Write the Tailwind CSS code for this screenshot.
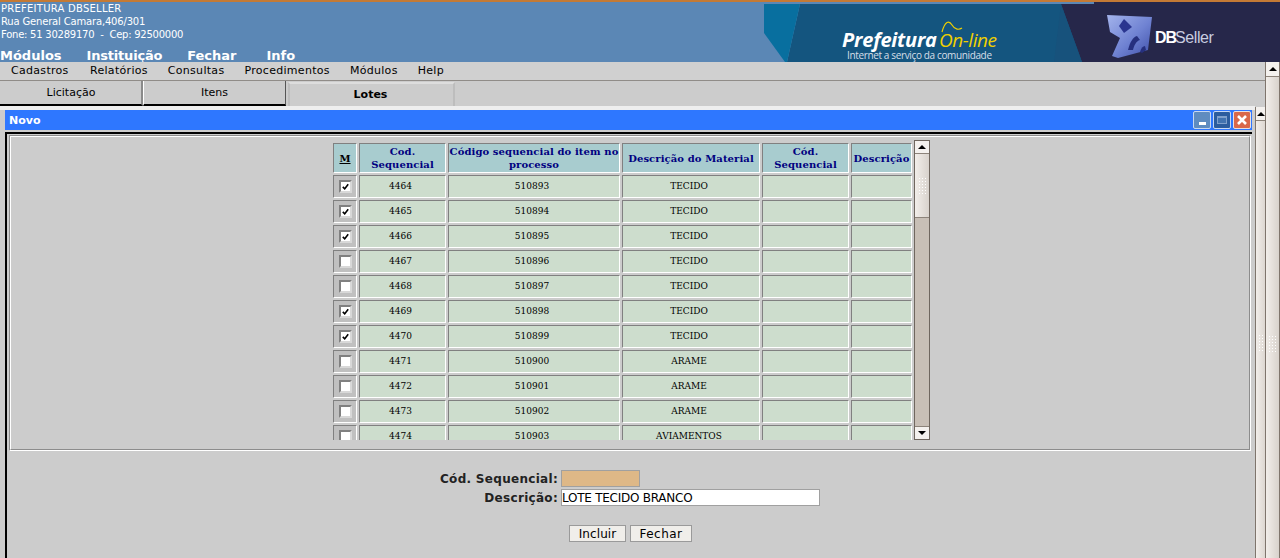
<!DOCTYPE html>
<html><head><meta charset="utf-8"><script src="https://cdn.jsdelivr.net/npm/@tailwindcss/browser@4"></script></head>
<body class="m-0 bg-[#cccccc] overflow-hidden">
<div class="w-[1280px] h-[558px] overflow-hidden flex flex-col font-['DejaVu_Sans',sans-serif] text-black">
  <header class="h-[62px] shrink-0 flex justify-between bg-[#5b87b5] border-t-2 border-[#c47a35] overflow-hidden">
    <div class="text-white pl-px">
      <div class="text-[10px] leading-[13px]">
        <div class="tracking-[0.25px]">PREFEITURA DBSELLER</div><div class="tracking-[-0.17px]">Rua General Camara,406/301</div><div class="whitespace-pre tracking-[-0.24px]">Fone: 51 30289170  -  Cep: 92500000</div>
      </div>
      <nav class="flex gap-[25px] text-[13px] font-bold leading-[16px] mt-[7px] -ml-px"><span>Módulos</span><span class="tracking-[-0.2px]">Instituição</span><span>Fechar</span><span class="ml-[5px]">Info</span></nav>
    </div>
    <svg class="w-[516px] h-[60px] shrink-0" viewBox="0 2 516 60">
      <defs><linearGradient id="logoBlue" x1="0" y1="0" x2="1" y2="1"><stop offset="0" stop-color="#a4b4ec"/><stop offset="0.55" stop-color="#6f82d2"/><stop offset="1" stop-color="#3d4ea8"/></linearGradient></defs>
      <rect x="0" y="2" width="516" height="60" fill="#26274a"/>
      <rect x="0" y="2" width="330" height="2" fill="#5b87b5"/>
      <rect x="0" y="4" width="60" height="58" fill="#5b87b5"/>
      <polygon points="36,4 297,4 318,62 23,62" fill="#14557f"/>
      <polygon points="297,4 290,62 318,62" fill="#17527c"/>
      <polygon points="0,4 36,4 23,62 21,62 0,33" fill="#086f9f"/>
      <text x="78" y="47" font-family="Open Sans, sans-serif" font-size="20" font-weight="700" font-style="italic" fill="#ffffff" textLength="95">Prefeitura</text>
      <text x="175" y="47" font-family="Open Sans, sans-serif" font-size="19" font-style="italic" fill="#f0d000" textLength="58">On-line</text>
      <path d="M178 32 C181 21 185 20 188 25 C191 30 195 30 198 28" fill="none" stroke="#f0d000" stroke-width="1.2"/>
      <text x="83" y="59" font-family="Open Sans, sans-serif" font-size="10" fill="#d6dfe8" textLength="145">Internet a serviço da comunidade</text>
      <polygon points="343,15 388,17 384,50 354,58 348,56 356,38 346,32" fill="url(#logoBlue)"/>
      <polygon points="360,19 368,27 360,33 355,26" fill="#2a3590"/>
      <path d="M364 50 C366 42 369 37 373 36 L376 40 C372 41 370 46 369 50 Z" fill="#26307e"/>
      <path d="M376 52 C377 48 379 46 381 46 L382 50 L378 53 Z" fill="#26307e"/>
      <text x="391" y="43" font-family="Liberation Sans, sans-serif" font-size="16" font-weight="700" fill="#fff" letter-spacing="-1">DB</text>
      <text x="411" y="43" font-family="Liberation Sans, sans-serif" font-size="16" fill="#c8cde0" letter-spacing="-0.4">Seller</text>
    </svg>
  </header>
  <div class="flex flex-1 min-h-0">
    <div class="flex-1 min-w-0 flex flex-col">
      <div class="h-[19px] shrink-0 flex items-center gap-5 pl-[11px] bg-[#d0d0d0] border-b-[1px] border-[#908c88] text-[11px] tracking-[0.3px]"><span class="w-[59px]">Cadastros</span><span>Relatórios</span><span>Consultas</span><span>Procedimentos</span><span>Módulos</span><span>Help</span></div>
      <div class="h-[25px] shrink-0 flex text-[11px]">
        <div class="w-[143px] flex justify-center pt-[4px] pl-[1px] border-r-2 border-b-2 border-r-[#8a8a8a] border-b-black bg-[#cccccc]">Licitação</div>
        <div class="w-[143px] flex justify-center pt-[4px] border-r border-b-2 border-r-[#555] border-b-black border-l border-l-white bg-[#cccccc]">Itens</div>
        <div class="w-[167px] ml-[2px] mt-px flex justify-center items-center pr-[2px] font-bold border-x-2 border-x-[#bdbdbd] border-t-2 border-t-[#dddddd] bg-[#cccccc]">Lotes</div>
      </div>
      <div class="flex-1 min-h-0 flex pl-[5px]">
        <div class="flex-1 min-w-0 pr-[3px]">
          <div class="border-t-[4px] border-[#eeeeee] -ml-[5px] -mr-[3px] pl-[5px] pr-[3px] pb-[2px]">
            <div class="h-[20px] bg-[#2e77ff] flex items-center justify-between pl-1 pr-[1px] text-white text-[11px] font-bold">
              <span class="pt-[2px]">Novo</span>
              <div class="flex gap-[2px]">
                <div class="w-[18px] h-[18px] border border-[#c8d8f0] rounded-[2px] bg-[#5f8cc0] flex items-end justify-center pb-[3px]"><div class="w-[7px] h-[3px] bg-white"></div></div>
                <div class="w-[18px] h-[18px] border border-[#c8d8f0] rounded-[2px] bg-[#2b5c9e] flex items-center justify-center"><div class="w-[10px] h-[8px] border border-[#7fa0cc] border-t-2 bg-[#4273b0]"></div></div>
                <div class="w-[18px] h-[18px] border border-[#e8e0e0] rounded-[2px] bg-[#d9684a] flex items-center justify-center"><svg class="w-3 h-3" viewBox="0 0 12 12"><path d="M2 2L10 10M10 2L2 10" stroke="#fff" stroke-width="2.6"/></svg></div>
              </div>
            </div>
          </div>
          <div class="border-l-2 border-t-2 border-black h-[430px] pl-[2px] pr-[1px] pt-px">
            <div class="h-[316px] border border-t-[#8c8c8c] border-l-[#8c8c8c] border-r-white border-b-white">
            <div class="h-[314px] border border-t-white border-l-white border-r-[#8c8c8c] border-b-[#8c8c8c] pt-[3px] flex justify-center">
              <div class="flex h-[300px] items-start">
                <div class="h-[300px] overflow-hidden pl-[3px] pr-[2px]">
                  <div class="grid grid-cols-[24px_87px_172px_138px_87px_61px] gap-[2px] pt-[3px] font-['DejaVu_Serif',serif] text-[9px] text-center">
                    <div class="h-[30px] bg-[#a8cccf] border border-t-[#808080] border-l-[#808080] border-r-white border-b-white flex items-center justify-center text-[10px] font-bold underline">M</div>
                    <div class="h-[30px] bg-[#a8cccf] border border-t-[#808080] border-l-[#808080] border-r-white border-b-white flex items-center justify-center text-[10px] leading-[13px] font-bold tracking-[0.1px] text-[#000080]">Cod. Sequencial</div>
                    <div class="h-[30px] bg-[#a8cccf] border border-t-[#808080] border-l-[#808080] border-r-white border-b-white flex items-center justify-center text-[10px] leading-[13px] font-bold tracking-[0.1px] text-[#000080]">Código sequencial do item no processo</div>
                    <div class="h-[30px] bg-[#a8cccf] border border-t-[#808080] border-l-[#808080] border-r-white border-b-white flex items-center justify-center text-[10px] leading-[13px] font-bold tracking-[0.1px] text-[#000080]">Descrição do Material</div>
                    <div class="h-[30px] bg-[#a8cccf] border border-t-[#808080] border-l-[#808080] border-r-white border-b-white flex items-center justify-center text-[10px] leading-[13px] font-bold tracking-[0.1px] text-[#000080] px-3">Cód. Sequencial</div>
                    <div class="h-[30px] bg-[#a8cccf] border border-t-[#808080] border-l-[#808080] border-r-white border-b-white flex items-center justify-center text-[10px] leading-[13px] font-bold tracking-[0.1px] text-[#000080]">Descrição</div>

                    <div class="h-[23px] bg-[#c0c0c0] border border-t-[#808080] border-l-[#808080] border-r-white border-b-white flex items-center justify-center"><div class="w-[13px] h-[13px] bg-white border-2 border-t-[#808080] border-l-[#808080] border-r-[#d8d8d8] border-b-[#d8d8d8] flex items-center justify-center"><svg class="w-[7px] h-[7px]" viewBox="0 0 9 9"><path d="M1 5L3.5 7.5L8 1.5" fill="none" stroke="#000" stroke-width="2"/></svg></div></div>
                    <div class="h-[23px] pr-[4px] bg-[#cdddcd] border border-t-[#808080] border-l-[#808080] border-r-white border-b-white flex items-center justify-center">4464</div><div class="h-[23px] pr-[4px] bg-[#cdddcd] border border-t-[#808080] border-l-[#808080] border-r-white border-b-white flex items-center justify-center">510893</div><div class="h-[23px] pr-[4px] bg-[#cdddcd] border border-t-[#808080] border-l-[#808080] border-r-white border-b-white flex items-center justify-center">TECIDO</div><div class="h-[23px] bg-[#cdddcd] border border-t-[#808080] border-l-[#808080] border-r-white border-b-white"></div><div class="h-[23px] bg-[#cdddcd] border border-t-[#808080] border-l-[#808080] border-r-white border-b-white"></div>

                    <div class="h-[23px] bg-[#c0c0c0] border border-t-[#808080] border-l-[#808080] border-r-white border-b-white flex items-center justify-center"><div class="w-[13px] h-[13px] bg-white border-2 border-t-[#808080] border-l-[#808080] border-r-[#d8d8d8] border-b-[#d8d8d8] flex items-center justify-center"><svg class="w-[7px] h-[7px]" viewBox="0 0 9 9"><path d="M1 5L3.5 7.5L8 1.5" fill="none" stroke="#000" stroke-width="2"/></svg></div></div>
                    <div class="h-[23px] pr-[4px] bg-[#cdddcd] border border-t-[#808080] border-l-[#808080] border-r-white border-b-white flex items-center justify-center">4465</div><div class="h-[23px] pr-[4px] bg-[#cdddcd] border border-t-[#808080] border-l-[#808080] border-r-white border-b-white flex items-center justify-center">510894</div><div class="h-[23px] pr-[4px] bg-[#cdddcd] border border-t-[#808080] border-l-[#808080] border-r-white border-b-white flex items-center justify-center">TECIDO</div><div class="h-[23px] bg-[#cdddcd] border border-t-[#808080] border-l-[#808080] border-r-white border-b-white"></div><div class="h-[23px] bg-[#cdddcd] border border-t-[#808080] border-l-[#808080] border-r-white border-b-white"></div>

                    <div class="h-[23px] bg-[#c0c0c0] border border-t-[#808080] border-l-[#808080] border-r-white border-b-white flex items-center justify-center"><div class="w-[13px] h-[13px] bg-white border-2 border-t-[#808080] border-l-[#808080] border-r-[#d8d8d8] border-b-[#d8d8d8] flex items-center justify-center"><svg class="w-[7px] h-[7px]" viewBox="0 0 9 9"><path d="M1 5L3.5 7.5L8 1.5" fill="none" stroke="#000" stroke-width="2"/></svg></div></div>
                    <div class="h-[23px] pr-[4px] bg-[#cdddcd] border border-t-[#808080] border-l-[#808080] border-r-white border-b-white flex items-center justify-center">4466</div><div class="h-[23px] pr-[4px] bg-[#cdddcd] border border-t-[#808080] border-l-[#808080] border-r-white border-b-white flex items-center justify-center">510895</div><div class="h-[23px] pr-[4px] bg-[#cdddcd] border border-t-[#808080] border-l-[#808080] border-r-white border-b-white flex items-center justify-center">TECIDO</div><div class="h-[23px] bg-[#cdddcd] border border-t-[#808080] border-l-[#808080] border-r-white border-b-white"></div><div class="h-[23px] bg-[#cdddcd] border border-t-[#808080] border-l-[#808080] border-r-white border-b-white"></div>

                    <div class="h-[23px] bg-[#c0c0c0] border border-t-[#808080] border-l-[#808080] border-r-white border-b-white flex items-center justify-center"><div class="w-[13px] h-[13px] bg-white border-2 border-t-[#808080] border-l-[#808080] border-r-[#d8d8d8] border-b-[#d8d8d8]"></div></div>
                    <div class="h-[23px] pr-[4px] bg-[#cdddcd] border border-t-[#808080] border-l-[#808080] border-r-white border-b-white flex items-center justify-center">4467</div><div class="h-[23px] pr-[4px] bg-[#cdddcd] border border-t-[#808080] border-l-[#808080] border-r-white border-b-white flex items-center justify-center">510896</div><div class="h-[23px] pr-[4px] bg-[#cdddcd] border border-t-[#808080] border-l-[#808080] border-r-white border-b-white flex items-center justify-center">TECIDO</div><div class="h-[23px] bg-[#cdddcd] border border-t-[#808080] border-l-[#808080] border-r-white border-b-white"></div><div class="h-[23px] bg-[#cdddcd] border border-t-[#808080] border-l-[#808080] border-r-white border-b-white"></div>

                    <div class="h-[23px] bg-[#c0c0c0] border border-t-[#808080] border-l-[#808080] border-r-white border-b-white flex items-center justify-center"><div class="w-[13px] h-[13px] bg-white border-2 border-t-[#808080] border-l-[#808080] border-r-[#d8d8d8] border-b-[#d8d8d8]"></div></div>
                    <div class="h-[23px] pr-[4px] bg-[#cdddcd] border border-t-[#808080] border-l-[#808080] border-r-white border-b-white flex items-center justify-center">4468</div><div class="h-[23px] pr-[4px] bg-[#cdddcd] border border-t-[#808080] border-l-[#808080] border-r-white border-b-white flex items-center justify-center">510897</div><div class="h-[23px] pr-[4px] bg-[#cdddcd] border border-t-[#808080] border-l-[#808080] border-r-white border-b-white flex items-center justify-center">TECIDO</div><div class="h-[23px] bg-[#cdddcd] border border-t-[#808080] border-l-[#808080] border-r-white border-b-white"></div><div class="h-[23px] bg-[#cdddcd] border border-t-[#808080] border-l-[#808080] border-r-white border-b-white"></div>

                    <div class="h-[23px] bg-[#c0c0c0] border border-t-[#808080] border-l-[#808080] border-r-white border-b-white flex items-center justify-center"><div class="w-[13px] h-[13px] bg-white border-2 border-t-[#808080] border-l-[#808080] border-r-[#d8d8d8] border-b-[#d8d8d8] flex items-center justify-center"><svg class="w-[7px] h-[7px]" viewBox="0 0 9 9"><path d="M1 5L3.5 7.5L8 1.5" fill="none" stroke="#000" stroke-width="2"/></svg></div></div>
                    <div class="h-[23px] pr-[4px] bg-[#cdddcd] border border-t-[#808080] border-l-[#808080] border-r-white border-b-white flex items-center justify-center">4469</div><div class="h-[23px] pr-[4px] bg-[#cdddcd] border border-t-[#808080] border-l-[#808080] border-r-white border-b-white flex items-center justify-center">510898</div><div class="h-[23px] pr-[4px] bg-[#cdddcd] border border-t-[#808080] border-l-[#808080] border-r-white border-b-white flex items-center justify-center">TECIDO</div><div class="h-[23px] bg-[#cdddcd] border border-t-[#808080] border-l-[#808080] border-r-white border-b-white"></div><div class="h-[23px] bg-[#cdddcd] border border-t-[#808080] border-l-[#808080] border-r-white border-b-white"></div>

                    <div class="h-[23px] bg-[#c0c0c0] border border-t-[#808080] border-l-[#808080] border-r-white border-b-white flex items-center justify-center"><div class="w-[13px] h-[13px] bg-white border-2 border-t-[#808080] border-l-[#808080] border-r-[#d8d8d8] border-b-[#d8d8d8] flex items-center justify-center"><svg class="w-[7px] h-[7px]" viewBox="0 0 9 9"><path d="M1 5L3.5 7.5L8 1.5" fill="none" stroke="#000" stroke-width="2"/></svg></div></div>
                    <div class="h-[23px] pr-[4px] bg-[#cdddcd] border border-t-[#808080] border-l-[#808080] border-r-white border-b-white flex items-center justify-center">4470</div><div class="h-[23px] pr-[4px] bg-[#cdddcd] border border-t-[#808080] border-l-[#808080] border-r-white border-b-white flex items-center justify-center">510899</div><div class="h-[23px] pr-[4px] bg-[#cdddcd] border border-t-[#808080] border-l-[#808080] border-r-white border-b-white flex items-center justify-center">TECIDO</div><div class="h-[23px] bg-[#cdddcd] border border-t-[#808080] border-l-[#808080] border-r-white border-b-white"></div><div class="h-[23px] bg-[#cdddcd] border border-t-[#808080] border-l-[#808080] border-r-white border-b-white"></div>

                    <div class="h-[23px] bg-[#c0c0c0] border border-t-[#808080] border-l-[#808080] border-r-white border-b-white flex items-center justify-center"><div class="w-[13px] h-[13px] bg-white border-2 border-t-[#808080] border-l-[#808080] border-r-[#d8d8d8] border-b-[#d8d8d8]"></div></div>
                    <div class="h-[23px] pr-[4px] bg-[#cdddcd] border border-t-[#808080] border-l-[#808080] border-r-white border-b-white flex items-center justify-center">4471</div><div class="h-[23px] pr-[4px] bg-[#cdddcd] border border-t-[#808080] border-l-[#808080] border-r-white border-b-white flex items-center justify-center">510900</div><div class="h-[23px] pr-[4px] bg-[#cdddcd] border border-t-[#808080] border-l-[#808080] border-r-white border-b-white flex items-center justify-center">ARAME</div><div class="h-[23px] bg-[#cdddcd] border border-t-[#808080] border-l-[#808080] border-r-white border-b-white"></div><div class="h-[23px] bg-[#cdddcd] border border-t-[#808080] border-l-[#808080] border-r-white border-b-white"></div>

                    <div class="h-[23px] bg-[#c0c0c0] border border-t-[#808080] border-l-[#808080] border-r-white border-b-white flex items-center justify-center"><div class="w-[13px] h-[13px] bg-white border-2 border-t-[#808080] border-l-[#808080] border-r-[#d8d8d8] border-b-[#d8d8d8]"></div></div>
                    <div class="h-[23px] pr-[4px] bg-[#cdddcd] border border-t-[#808080] border-l-[#808080] border-r-white border-b-white flex items-center justify-center">4472</div><div class="h-[23px] pr-[4px] bg-[#cdddcd] border border-t-[#808080] border-l-[#808080] border-r-white border-b-white flex items-center justify-center">510901</div><div class="h-[23px] pr-[4px] bg-[#cdddcd] border border-t-[#808080] border-l-[#808080] border-r-white border-b-white flex items-center justify-center">ARAME</div><div class="h-[23px] bg-[#cdddcd] border border-t-[#808080] border-l-[#808080] border-r-white border-b-white"></div><div class="h-[23px] bg-[#cdddcd] border border-t-[#808080] border-l-[#808080] border-r-white border-b-white"></div>

                    <div class="h-[23px] bg-[#c0c0c0] border border-t-[#808080] border-l-[#808080] border-r-white border-b-white flex items-center justify-center"><div class="w-[13px] h-[13px] bg-white border-2 border-t-[#808080] border-l-[#808080] border-r-[#d8d8d8] border-b-[#d8d8d8]"></div></div>
                    <div class="h-[23px] pr-[4px] bg-[#cdddcd] border border-t-[#808080] border-l-[#808080] border-r-white border-b-white flex items-center justify-center">4473</div><div class="h-[23px] pr-[4px] bg-[#cdddcd] border border-t-[#808080] border-l-[#808080] border-r-white border-b-white flex items-center justify-center">510902</div><div class="h-[23px] pr-[4px] bg-[#cdddcd] border border-t-[#808080] border-l-[#808080] border-r-white border-b-white flex items-center justify-center">ARAME</div><div class="h-[23px] bg-[#cdddcd] border border-t-[#808080] border-l-[#808080] border-r-white border-b-white"></div><div class="h-[23px] bg-[#cdddcd] border border-t-[#808080] border-l-[#808080] border-r-white border-b-white"></div>

                    <div class="h-[23px] bg-[#c0c0c0] border border-t-[#808080] border-l-[#808080] border-r-white border-b-white flex items-center justify-center"><div class="w-[13px] h-[13px] bg-white border-2 border-t-[#808080] border-l-[#808080] border-r-[#d8d8d8] border-b-[#d8d8d8]"></div></div>
                    <div class="h-[23px] pr-[4px] bg-[#cdddcd] border border-t-[#808080] border-l-[#808080] border-r-white border-b-white flex items-center justify-center">4474</div><div class="h-[23px] pr-[4px] bg-[#cdddcd] border border-t-[#808080] border-l-[#808080] border-r-white border-b-white flex items-center justify-center">510903</div><div class="h-[23px] pr-[4px] bg-[#cdddcd] border border-t-[#808080] border-l-[#808080] border-r-white border-b-white flex items-center justify-center">AVIAMENTOS</div><div class="h-[23px] bg-[#cdddcd] border border-t-[#808080] border-l-[#808080] border-r-white border-b-white"></div><div class="h-[23px] bg-[#cdddcd] border border-t-[#808080] border-l-[#808080] border-r-white border-b-white"></div>
                  </div>
                </div>
                <div class="w-4 h-[300px] flex flex-col border border-[#6f665e] bg-[#c8bfb6]">
                  <div class="h-[13px] bg-[#f4f1ee] border-b border-[#8c837a] flex items-center justify-center"><div class="w-0 h-0 border-x-[4px] border-x-transparent border-b-[4px] border-b-black"></div></div>
                  <div class="h-[64px] bg-gradient-to-r from-[#f2eeea] to-[#d8d2cc] border-b border-[#8c837a] flex items-center justify-center"><div class="w-[8px] h-[17px] bg-[radial-gradient(#ffffff_40%,transparent_45%)] bg-[length:3px_3px]"></div></div>
                  <div class="flex-1"></div>
                  <div class="h-[13px] bg-[#f4f1ee] border-t border-[#8c837a] flex items-center justify-center"><div class="w-0 h-0 border-x-[4px] border-x-transparent border-t-[4px] border-t-black"></div></div>
                </div>
              </div>
            </div>
            </div>
            <form class="pt-[19px] text-[12px]">
              <div class="grid grid-cols-[549px_auto] gap-x-[3px] gap-y-[2px] items-center h-[36px]">
                <label class="text-right font-bold text-[#222] tracking-[0.3px] text-[12px] leading-[15px] pt-[2px]">Cód. Sequencial:</label>
                <div class="w-[79px] h-[17px] bg-[#deb887] border border-[#a0a0a0]"></div>
                <label class="text-right font-bold text-[#222] tracking-[0.3px] text-[12px] leading-[15px] pt-[2px]">Descrição:</label>
                <div class="w-[259px] h-[17px] bg-white border border-[#a0a0a0] flex items-center leading-none tracking-[-0.25px]">LOTE TECIDO BRANCO</div>
              </div>
              <div class="flex pl-[560px] gap-1 mt-[19px]">
                <button type="button" class="w-[57px] h-[17px] bg-[#f0eeea] border border-[#9a9a9a] flex items-center justify-center tracking-[0.1px]">Incluir</button>
                <button type="button" class="w-[62px] h-[17px] bg-[#f0eeea] border border-[#9a9a9a] flex items-center justify-center tracking-[0.5px]">Fechar</button>
              </div>
            </form>
          </div>
        </div>
        <div class="w-[10px] shrink-0 flex flex-col mt-[1px] border-l border-[#7f756c] bg-gradient-to-r from-[#f2eeea] to-[#ddd7d1]">
          <div class="h-[14px] bg-[#f4f1ee] border-b border-[#8c837a] flex items-center justify-center"><div class="w-0 h-0 border-x-[4px] border-x-transparent border-b-[4px] border-b-black"></div></div>
          <div class="h-[230px] flex items-end justify-center"><div class="w-[6px] h-[17px] bg-[radial-gradient(#ffffff_40%,transparent_45%)] bg-[length:3px_3px]"></div></div>
        </div>
      </div>
    </div>
    <div class="w-[15px] shrink-0 flex flex-col border-x border-[#7f756c] bg-gradient-to-r from-[#f2eeea] to-[#d8d2cc]">
      <div class="h-[15px] bg-[#f4f1ee] border-b border-[#8c837a] flex items-center justify-center"><div class="w-0 h-0 border-x-[4px] border-x-transparent border-b-[4px] border-b-black"></div></div>
      <div class="h-[276px] flex items-end justify-center"><div class="w-[9px] h-[18px] bg-[radial-gradient(#ffffff_40%,transparent_45%)] bg-[length:3px_3px]"></div></div>
    </div>
  </div>
</div>
</body></html>
